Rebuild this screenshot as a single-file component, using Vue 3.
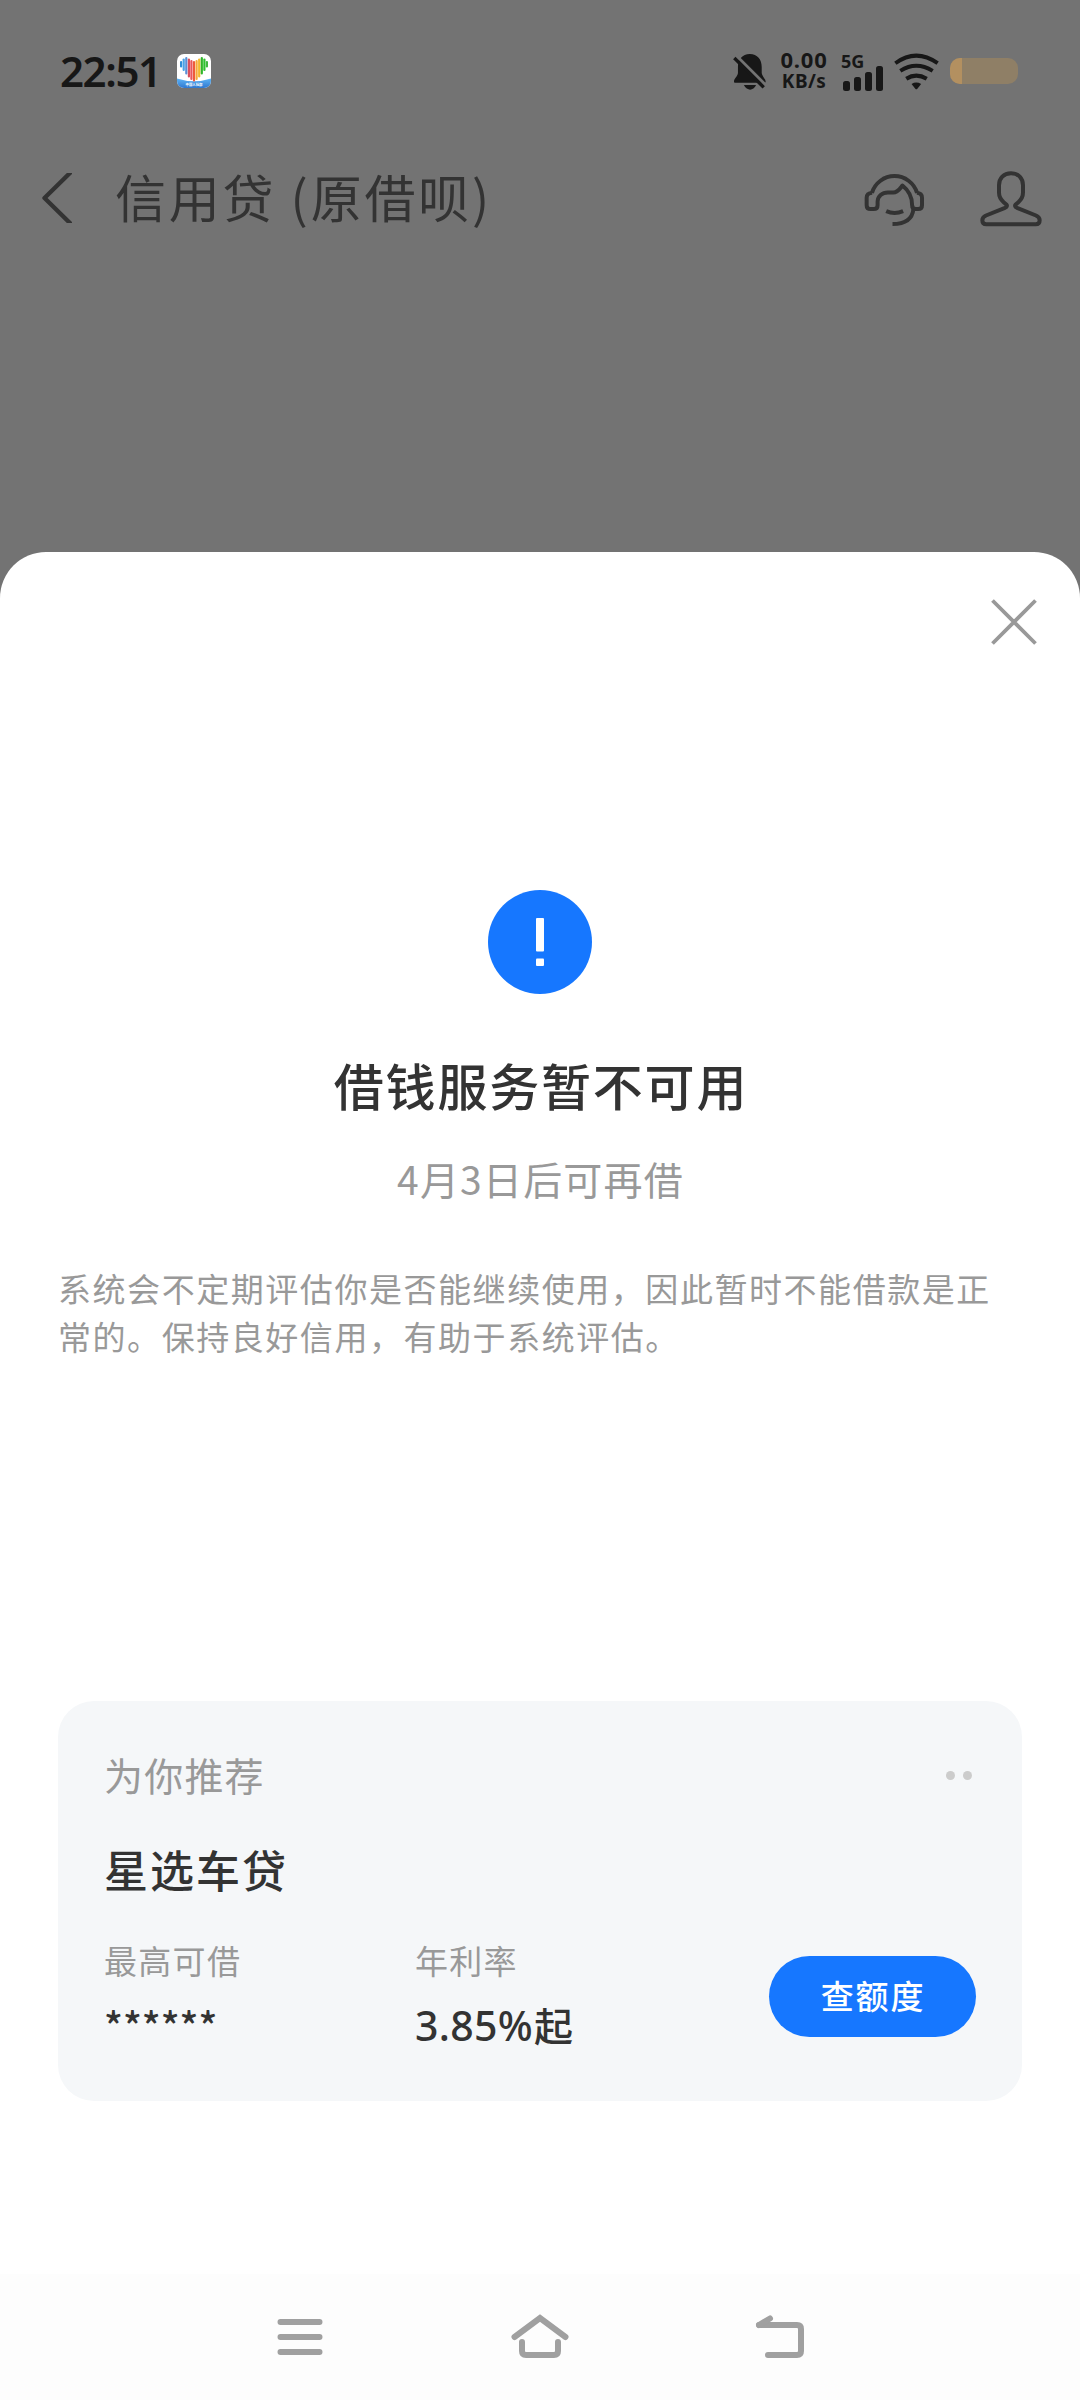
<script setup>
const signalBars = [10, 14, 19, 25]

// stripes of the heart logo: x, top, bottom, colour
const stripes = [
  [4.1, 8, 12.5, '#2f8ed8'],
  [6.7, 5.5, 16, '#4aa3e6'],
  [9.3, 4, 19.5, '#5b8fd6'],
  [11.9, 5.5, 22.5, '#d9505c'],
  [14.4, 7, 25, '#e8575c'],
  [17, 8, 26.5, '#ee5a3c'],
  [19.6, 7, 25, '#f6a93b'],
  [22.2, 5.5, 22.5, '#f3b82f'],
  [24.8, 4, 19.5, '#2fb52a'],
  [27.4, 5.5, 16, '#2fc22f'],
  [29.9, 8, 12.5, '#3fb83f'],
]

const product = {
  name: '星选车贷',
  stats: [
    { label: '最高可借', value: '******', masked: true },
    { label: '年利率', value: '3.85%', suffix: '起' },
  ],
}
</script>

<template>
  <div class="page">
    <div class="status-bar">
      <span class="time">22:51</span>
      <svg class="app-logo" viewBox="0 0 34 34">
        <defs>
          <linearGradient id="wave" x1="0" y1="0" x2="0" y2="1">
            <stop offset="0" stop-color="#5eb4f5" />
            <stop offset="1" stop-color="#2f78d0" />
          </linearGradient>
          <clipPath id="logo-clip"><rect width="34" height="34" rx="7" /></clipPath>
        </defs>
        <g clip-path="url(#logo-clip)">
          <rect width="34" height="34" fill="#fff" />
          <path d="M0 24.500Q17 30 34 24.500V34H0z" fill="url(#wave)" />
          <line v-for="s in stripes" :key="s[0]" :x1="s[0]" :x2="s[0]" :y1="s[1]" :y2="s[2]" :stroke="s[3]"
            stroke-width="2.2" stroke-linecap="round" />
        </g>
        <text x="17" y="32" text-anchor="middle" class="logo-text">中国人社部</text>
      </svg>

      <div class="status-right">
        <svg class="bell" viewBox="0 0 100 112">
          <path d="M51 3C28 3 15 20 15 42V60c0 10-12 18-12 26 0 3 1 4 4 4H95c3 0 4-2 4-4 0-8-12-16-12-26V42C87 20 74 3 51 3z" />
          <path d="M33 97h37c-4 10-12 14-18 14s-15-4-19-14z" />
          <path d="M5 3L108 106" stroke="#737373" stroke-width="9" />
          <path d="M4 15L93 104" stroke="#171717" stroke-width="10" />
        </svg>
        <div class="speed">
          <span class="speed-value">0.00</span>
          <span class="speed-unit">KB/s</span>
        </div>
        <div class="signal">
          <span class="network">5G</span>
          <div class="bars">
            <i v-for="h in signalBars" :key="h" :style="{ height: h + 'px' }"></i>
          </div>
        </div>
        <svg class="wifi" viewBox="0 0 136 112">
          <g fill="none" stroke="#171717" stroke-width="12">
            <path d="M4 31Q67 -15 132 31" />
            <path d="M19 54Q67 23 117 54" />
            <path d="M37 78Q67 59 99 78" />
          </g>
          <path d="M53 94q14 -9 29 0L70 109q-2.500 2 -5 0z" />
        </svg>
        <div class="battery"><i></i></div>
      </div>
    </div>

    <header class="nav">
      <svg class="back" viewBox="0 0 31 50">
        <path d="M32 -3L3.500 25L32 53" />
      </svg>
      <h1>信用贷 (原借呗)</h1>
      <svg class="service" viewBox="0 0 184 170">
        <path d="M24 68A71 71 0 0 1 160 68" />
        <path d="M25 68c-11 0-17 5-17 15v22c0 8 5 12 12 12h9c8 0 12-5 12-12V95C41 78 55 67 72 67H88C102 67 108 56 116 46C131 58 145 78 145 104c0 9 4 13 11 13h7c8 0 12-4 12-12V83c0-10-6-15-16-15" />
        <path d="M149 117C146 146 125 162 86 162" />
        <path d="M67 123Q92 134 118 123" />
      </svg>
      <svg class="user" viewBox="0 0 186 170">
        <path d="M93 9c-22 0-36 15-36 36v22c0 14 6 22 14 29l8 7c4 4 0 8-4 10L18 136c-8 4-11 8-11 14 0 8 4 12 12 12H167c8 0 12-4 12-12 0-6-3-10-11-14L111 113c-4-2-8-6-4-10l8-7c8-7 14-15 14-29V45c0-21-14-36-36-36z" />
      </svg>
    </header>

    <main class="sheet">
      <svg class="close" viewBox="0 0 46 46">
        <path d="M1.500 1.500L44.500 44.500M44.500 1.500L1.500 44.500" />
      </svg>

      <section class="notice">
        <svg class="alert" viewBox="0 0 104 104">
          <circle cx="52" cy="52" r="52" fill="#1677ff" />
          <rect x="48" y="28" width="8" height="33.500" rx="1" fill="#fff" />
          <rect x="48" y="68.500" width="8" height="7.500" rx="1" fill="#fff" />
        </svg>
        <h2>借钱服务暂不可用</h2>
        <p class="date">4月3日后可再借</p>
        <p class="desc">系统会不定期评估你是否能继续使用，因此暂时不能借款是正常的。保持良好信用，有助于系统评估。</p>
      </section>

      <section class="card">
        <div class="card-head">
          <span>为你推荐</span>
          <div class="dots"><i></i><i></i></div>
        </div>
        <h3>{{ product.name }}</h3>
        <div class="card-body">
          <div v-for="stat in product.stats" :key="stat.label" class="stat">
            <span class="label">{{ stat.label }}</span>
            <span class="value"><span class="num" :class="{ masked: stat.masked }">{{ stat.value }}</span>{{ stat.suffix }}</span>
          </div>
          <button type="button">查额度</button>
        </div>
      </section>
    </main>

    <footer class="system-nav">
      <svg viewBox="0 0 60 48">
        <path d="M10.500 12H49.500M10.500 27H49.500M10.500 42H49.500" />
      </svg>
      <svg viewBox="0 0 60 48">
        <path d="M4.500 27L30 8L55.500 27" />
        <path d="M12 32V41Q12 45 16 45H44Q48 45 48 41V32" />
      </svg>
      <svg viewBox="0 0 60 48">
        <path d="M9 15H47Q51 15 51 19V41Q51 45 47 45H18" />
        <path d="M9 15L20 8.500" />
      </svg>
    </footer>
  </div>
</template>

<style>
body {
  margin: 0;
}
</style>

<style scoped>
.page {
  display: flex;
  flex-direction: column;

  width: 1080px;
  height: 2400px;

  background: #737373;
  font-family: "Noto Sans CJK SC", sans-serif;
  color: #333;
}

h1, h2, h3, p {
  margin: 0;
}

/* status bar */
.status-bar {
  display: flex;
  align-items: center;

  box-sizing: border-box;
  height: 142px;
  padding-left: 60px;

  color: #171717;
  fill: #171717;
}

.time {
  width: 117px;

  font-family: "Noto Sans", sans-serif;
  font-size: 42px;
  font-weight: 600;
  line-height: 60px;
  letter-spacing: -1.400px;
  white-space: nowrap;
}

.app-logo {
  width: 34px;
  height: 34px;
}

.logo-text {
  font-size: 3.400px;
  font-weight: 700;
  fill: #fff;
}

.status-right {
  display: flex;
  align-items: center;

  margin-left: auto;
  padding-right: 62px;
}

.bell {
  width: 33px;
  height: 37px;
}

.speed {
  display: flex;
  flex-direction: column;
  align-items: center;

  width: 50px;
  margin: -2px 0 0 13px;

  font-family: "Noto Sans", sans-serif;
  font-weight: 700;
  white-space: nowrap;
}

.speed-value {
  font-size: 22px;
  line-height: 22px;
  letter-spacing: .8px;
}

.speed-unit {
  font-size: 19px;
  line-height: 22px;
  letter-spacing: .4px;
}

.signal {
  position: relative;

  width: 43px;
  height: 37px;
  margin-left: 12px;
}

.network {
  position: absolute;
  top: 0;
  left: 0;

  font-family: "Noto Sans", sans-serif;
  font-size: 18px;
  font-weight: 700;
  line-height: 16px;
}

.bars {
  display: flex;
  align-items: flex-end;
  gap: 4.500px;

  height: 38px;
  padding-left: 2px;
}

.bars i {
  width: 6.500px;
  border-radius: 2.500px;
  background: #171717;
}

.wifi {
  width: 45px;
  height: 37px;
  margin-left: 10px;
}

.battery {
  width: 68px;
  height: 26px;
  margin-left: 11px;

  border-radius: 10px;
  background: #8f7f66;
  overflow: hidden;
}

.battery i {
  display: block;
  width: 12px;
  height: 100%;
  background: #b39060;
}

/* title bar */
.nav {
  display: flex;
  align-items: center;

  height: 112px;
  padding: 0 38px 0 41px;
}

.nav svg {
  fill: none;
  stroke: #333;
  stroke-width: 12;
  stroke-linejoin: round;
}

.nav .back {
  width: 31px;
  height: 50px;
  stroke-width: 4.300;
}

.nav h1 {
  margin: -5px 0 0 43px;

  font-size: 51px;
  font-weight: 400;
  line-height: 70px;
  letter-spacing: 2.800px;
  white-space: nowrap;
}

.service {
  width: 61px;
  height: 57px;
  margin-left: auto;
}

.user {
  width: 62px;
  height: 57px;
  margin-left: 55px;
}

/* bottom sheet */
.sheet {
  display: flex;
  flex-direction: column;

  box-sizing: border-box;
  height: 1722px;
  margin-top: 298px;
  padding: 0 58px;

  border-radius: 46px 46px 0 0;
  background: #fff;
}

.close {
  align-self: flex-end;

  width: 46px;
  height: 46px;
  margin: 47px -15px 0 0;

  fill: none;
  stroke: #999;
  stroke-width: 3.800;
}

.notice {
  display: flex;
  flex-direction: column;
  align-items: center;

  height: 811px;
  padding-top: 245px;
}

.alert {
  width: 104px;
  height: 104px;
}

.notice h2 {
  margin: 55px 0 0 2px;

  font-size: 50px;
  font-weight: 500;
  line-height: 70px;
  letter-spacing: 1.800px;
}

.date {
  margin: 31px 0 0 1px;

  font-size: 39px;
  line-height: 56px;
  letter-spacing: 1.200px;
  color: #999;
}

.desc {
  align-self: stretch;
  margin-top: 58px;

  font-size: 33px;
  line-height: 48px;
  letter-spacing: 1.550px;
  color: #999;
}

/* recommended product */
.card {
  box-sizing: border-box;
  height: 400px;
  padding: 45px 46px 0;

  border-radius: 36px;
  background: #f5f7f9;
}

.card-head {
  display: flex;
  justify-content: space-between;
  align-items: center;

  height: 56px;

  font-size: 39px;
  line-height: 56px;
  letter-spacing: 1.200px;
  color: #999;
}

.dots {
  display: flex;
  gap: 8px;
  margin: 2px 4px 0 0;
}

.dots i {
  width: 9px;
  height: 9px;
  border-radius: 50%;
  background: #ccc;
}

.card h3 {
  margin-top: 35px;

  font-size: 44px;
  font-weight: 500;
  line-height: 64px;
  letter-spacing: 2px;
}

.card-body {
  display: flex;
  height: 110px;
  margin-top: 36px;
}

.stat {
  display: flex;
  flex-direction: column;
  width: 311px;
}

.label {
  font-size: 33px;
  line-height: 46px;
  letter-spacing: 1.300px;
  color: #999;
}

.value {
  margin-top: 13px;

  font-size: 39px;
  font-weight: 500;
  line-height: 56px;
}

.num {
  margin-right: 1px;

  font-family: "Noto Sans", sans-serif;
  font-size: 41px;
  letter-spacing: .3px;
}

.num.masked {
  font-family: "Noto Sans CJK SC", sans-serif;
  font-size: 39px;
  letter-spacing: 0;
}

.card-body button {
  width: 207px;
  height: 81px;
  margin: 19px 0 0 auto;
  padding: 0 0 3px 1px;

  border: none;
  border-radius: 41px;
  background: #1677ff;

  font-family: inherit;
  font-size: 33px;
  font-weight: 500;
  letter-spacing: 1.800px;
  color: #fff;
}

/* android navigation */
.system-nav {
  display: flex;
  justify-content: center;
  gap: 180px;

  box-sizing: border-box;
  height: 126px;
  padding-top: 36px;

  background: #fdfdfd;
}

.system-nav svg {
  width: 60px;
  height: 48px;

  fill: none;
  stroke: #a0a0a0;
  stroke-width: 6;
  stroke-linecap: round;
}
</style>
